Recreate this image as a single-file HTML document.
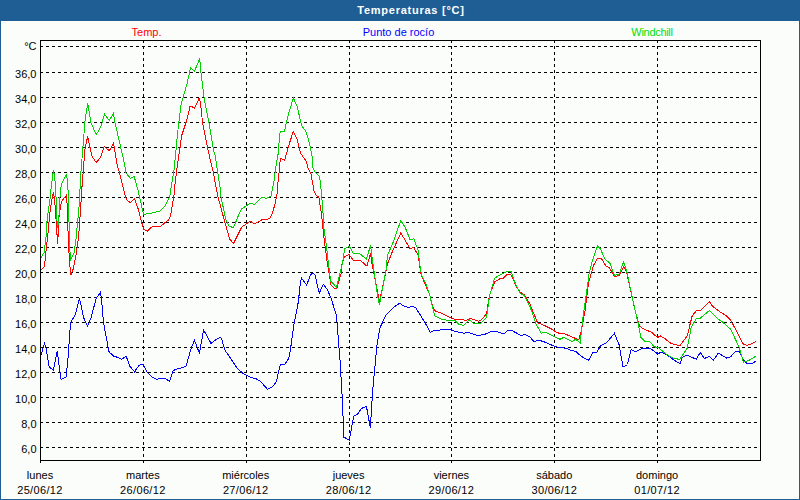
<!DOCTYPE html>
<html><head><meta charset="utf-8"><style>
html,body{margin:0;padding:0;background:#fbfdfb;}
svg{display:block;}
</style></head><body>
<svg width="800" height="500" viewBox="0 0 800 500">
<rect width="800" height="500" fill="#fbfdfb"/>
<rect x="0" y="0" width="800" height="21" fill="#1f5e94"/>
<rect x="0" y="0" width="1" height="500" fill="#1f5e94"/>
<rect x="799" y="0" width="1" height="500" fill="#1f5e94"/>
<rect x="0" y="499" width="800" height="1" fill="#1f5e94"/>
<path d="M40 46.5H760 M40 72.5H760 M40 97.5H760 M40 122.5H760 M40 147.5H760 M40 172.5H760 M40 197.5H760 M40 222.5H760 M40 247.5H760 M40 272.5H760 M40 297.5H760 M40 322.5H760 M40 347.5H760 M40 372.5H760 M40 397.5H760 M40 422.5H760 M40 447.5H760 M143.5 40V460 M246.5 40V460 M349.5 40V460 M451.5 40V460 M554.5 40V460 M657.5 40V460" stroke="#000" stroke-width="1" stroke-dasharray="3 3" fill="none" shape-rendering="crispEdges"/>
<path d="M40.5 40.5H760.5V460.5H40.5ZM40.5 460V463M143.5 460V463M246.5 460V463M349.5 460V463M451.5 460V463M554.5 460V463M657.5 460V463" stroke="#000" stroke-width="1" fill="none" shape-rendering="crispEdges"/>
<path d="M41,355 L44.5,343.5 L45.8,347 L49.1,366.2 L50.4,368.1 L53.5,370 L57.2,351.2 L61,379.4 L66,376.9 L67.9,360 L69.8,332.5 L70.8,322.5 L75.4,314.4 L79.5,298.1 L83.5,317.5 L87.5,326.2 L91,318.1 L96,298.8 L100.4,292.5 L101.6,300 L103.5,322.5 L107.9,346.2 L109.1,351.9 L113.5,356 L117.2,357.2 L121.6,359.4 L126.2,356.2 L129.8,366.2 L134.8,372.2 L136,369.4 L139.1,365.2 L142.9,364.4 L147.2,372.2 L152.2,377.2 L156.6,379.4 L160.4,378.1 L164.8,378.5 L169.5,381.2 L172.9,371.2 L174.8,369.8 L180.4,368.1 L186,366.2 L191,348.8 L194.4,340.2 L197.2,347.5 L199.5,353.1 L203.5,330.2 L206.6,335 L211,343.5 L215.4,340 L220,337.2 L221.6,338.8 L224.8,350 L230,357.4 L237,368 L242.7,373.2 L251,377.6 L255.4,378.4 L260.2,381 L267.6,389.4 L272.9,386.3 L276.4,381.5 L280.3,364.4 L284.7,364.4 L288.6,358.7 L290.4,350 L293.8,325 L298.7,300 L299.4,290.1 L300.6,281.8 L301.6,278.3 L306.7,285.2 L310.1,275.7 L311.6,273.8 L313.7,273.3 L315,274.9 L319.2,293.2 L323.4,284.4 L327.6,290.1 L331.4,299.3 L333.5,306 L336.5,315.7 L340,360 L342,394 L344,437.2 L345.6,438 L349.3,440.4 L350.4,434 L353.6,416.4 L357.6,414 L361.6,408.4 L366.4,406.3 L368,414.8 L370.4,428.4 L371.5,408.4 L373.1,386 L377,345 L380,327.7 L386,315 L393.5,307.5 L399.5,303.3 L404,306 L408.5,307.5 L412.2,306 L416,308.2 L425,322.5 L430.2,332.2 L434,330.7 L440,330 L442.2,329.2 L449,329.5 L455,331.4 L464,333.2 L468.5,332.5 L477.5,335.5 L485,334.3 L491,331.4 L497,331.7 L503.7,334 L508.2,330.2 L511.2,330.2 L521,335.5 L524.7,334.4 L530,337 L533.7,341.5 L539.7,340.4 L545,342.2 L555.4,346.7 L560,347.5 L566,348.3 L570.5,350.2 L575.7,351.3 L581,356.2 L588.5,360.4 L593,352.5 L596.7,352.8 L600.5,345.7 L606.5,342.7 L614.4,333.3 L619.2,345 L623,367.2 L627.5,364.5 L631.2,349.5 L635.7,351.7 L641.7,348.7 L650,348.3 L657.5,353.7 L662,352.2 L668,355.8 L674,360 L680,363.7 L682.3,357.2 L687.2,355.2 L696.2,359.2 L700.3,352.3 L704.4,358.5 L709.3,356.4 L713.4,360.2 L718.4,353.1 L726.6,358 L730.7,356.9 L734.8,352 L738.8,351.2 L740.4,354 L743.2,359.6 L747,363.4 L752,363.4 L755.6,361.3" stroke="#0000ff" stroke-width="1" fill="none" shape-rendering="crispEdges"/>
<path d="M41,270 L44.5,266.2 L46,251.2 L47.9,233.8 L49.8,213.8 L51.6,201.2 L53.5,191.9 L54.8,202.5 L56.6,226.2 L57.5,244.4 L58.5,231.2 L59.1,215 L61.6,201.2 L66.6,195 L67.2,206.2 L68.5,245 L69.8,265 L70.8,275 L72.9,270 L75.8,256.2 L78.5,237.5 L79.8,220 L82.2,183.8 L85,149 L87.7,136.2 L91.7,155.7 L96.2,162.5 L100.7,157.2 L104.2,146.3 L109.3,150.8 L113.5,143.3 L117.2,165 L119.8,173.8 L122.2,183.8 L125.4,196.9 L127.2,200.6 L130.4,202.5 L134.5,198.5 L138.2,209 L143.5,229.2 L147.2,231.2 L151.7,227 L156.2,226.2 L160.7,226.2 L168.2,220.2 L170.5,216.5 L174,195 L174.5,188 L176.5,172 L178.5,157 L180.5,145 L181.5,136 L186.5,121 L190,106.5 L191.5,106.5 L194.5,108 L198.5,100 L199,98 L200,101 L201,108 L202.5,122 L207,145 L210,159 L213,171 L217.5,195 L224.5,221 L229.7,239 L233.5,243.5 L241.7,227 L246.2,224 L250,221 L254.5,223.8 L262.5,219.5 L267.5,219.5 L270,218 L272.5,213 L275,204 L277,194 L278,182 L279.1,172 L280.4,158.4 L284.8,160.1 L287.9,148.2 L293.3,131.3 L297.1,139 L300.7,153.5 L306.4,161.5 L308,168 L311,174 L314,191 L315.5,194.5 L319,197.5 L320.5,208 L321.5,214 L323.5,234 L326.5,257 L327.5,264 L331,284.8 L333.7,287.9 L336.7,289 L338.2,283.3 L341.3,272.6 L342,264 L344.5,257 L349,254.5 L353,260 L359.5,260 L364,263.5 L367,266.2 L370.5,253 L372,264 L378.5,297 L379.5,301.5 L386,271 L387.5,263.8 L393,250 L400.8,233 L405,240 L410,248.8 L413.8,247.5 L418,255 L421.2,275 L429.4,294 L433.2,308.2 L435.4,311.2 L440,312.7 L452,318.5 L455,319.2 L462.5,319.7 L466.2,320.7 L470,318.2 L478.2,321.2 L481.2,320 L486.5,314 L489.5,295.2 L494.7,281.7 L500,278.7 L503.7,278 L507.5,274.2 L510.5,274.2 L512,276.5 L516.5,287 L520.2,292.2 L524.7,295.2 L530,304.2 L537.5,322.7 L545,325.7 L551,328.7 L555.4,331.7 L560,333.7 L564.5,333.7 L569.7,336 L578.7,339.7 L581,332.2 L585.2,310 L588.5,283 L593.7,265 L597.5,258.2 L601.2,258.2 L605.7,265.7 L609.5,267.7 L614,276.2 L616.2,276.5 L619.2,275.2 L623.7,266.5 L626.7,272.5 L635,310 L639.5,326.2 L644,329.2 L651.5,332.2 L657.5,337.5 L660.5,336 L665,338.7 L671,343.5 L675.5,344.7 L680,345.7 L687.2,335.9 L692.1,316.2 L696.2,310.8 L700.3,310.5 L709.3,301.5 L712.6,306.4 L719.2,311.3 L725.7,315.4 L730.7,320.3 L735.6,329.3 L743,343.8 L747,345.4 L752,343.8 L755.6,341.6" stroke="#ff0000" stroke-width="1" fill="none" shape-rendering="crispEdges"/>
<path d="M41,257.5 L44.1,252.5 L46,237.5 L47.2,218.8 L49.8,201.2 L51.6,183.8 L53.5,170 L54.8,177.5 L56.6,206.2 L57.2,227.5 L58.5,224 L60.4,190 L62.2,182.5 L66.6,174.4 L67.9,186.2 L69.8,247.5 L70.4,260 L74.1,252.5 L76,238.8 L79.1,206.2 L81,171.2 L83.5,140 L85,121.2 L87.7,103.2 L91,122.7 L96.2,134.7 L100.7,127.2 L104.5,114.2 L109.3,120.5 L113.5,113.3 L115,122.7 L124.8,165 L125.4,171.9 L130.4,178.5 L134.1,176.2 L138.2,191 L143.5,214.2 L149.5,213.8 L154,212.4 L160,211.2 L165.2,206 L169.7,196.2 L170,195 L172,182 L174,170 L175.5,155 L176,150 L177.5,134 L179,121 L180.5,109 L181,105 L183.5,96 L187,84 L190.5,68 L194.5,71 L198.5,61.5 L199.5,59.2 L200.5,64 L201,72.5 L204,97 L204.5,100 L207,113 L209,123 L213.5,150 L215.5,157 L217.5,171 L220,187 L220.5,195 L226,220.2 L229,226.2 L233.5,227.7 L238,216.5 L241.7,208.7 L246.2,206 L250,203 L254.5,204.5 L262,197 L266.5,198.5 L271,196 L272.5,188 L274.5,179 L275.1,172 L276.4,163.2 L278.2,153.5 L279.5,136.4 L280.4,131.2 L284.4,131.2 L286.6,121.9 L288.8,113.1 L291.4,104.3 L293.3,98 L297.1,106.1 L300.7,121.9 L302,126.3 L305.5,130.7 L307.7,136.8 L309.9,145.6 L312.5,157.9 L313,168 L315,172 L319.5,176.5 L320.5,183 L321.5,194 L322.5,205 L324,229 L326.5,247 L329.5,272.6 L330.6,281 L336.3,287.1 L337.5,283.3 L339.8,274.2 L342.8,262 L344.5,249 L347,247.5 L349.5,246.5 L353,253 L359.5,253.5 L366.5,259 L370.5,245.5 L372,257 L377.7,297 L379.5,304.5 L386,270 L387.5,255.5 L393,242.5 L400.8,220.5 L405,227 L410,239.5 L413.8,238.8 L418,250 L420.5,270 L422,276 L426.5,285 L430.2,297 L433.2,309.7 L434.7,315.7 L440,318.7 L449,320.7 L455,320.7 L459.5,324.8 L464,325.2 L469.2,319.7 L473,323 L481.2,323 L486.5,317.7 L489.5,296 L494.7,278 L501.5,274.2 L506.7,271.7 L511.2,271.7 L515,282.5 L520.2,293.7 L524,295.2 L530,306.5 L536,324 L541.2,333.2 L545.7,332.2 L551,335.2 L560,339.2 L563.7,337.5 L572,341.7 L575.7,339.3 L580.2,342.7 L582.5,321 L584.7,305 L589.2,273.2 L592.2,261.2 L597.5,246.2 L600.5,249.2 L605,259 L610.2,263.5 L612.5,271 L614.7,275.5 L619.2,274 L623.7,261.7 L626.7,271 L635,310 L638,322.5 L641,337.5 L644.7,341.2 L650,341.7 L653.7,346.5 L659,348 L665,353.2 L671.7,357.7 L678.4,359.2 L680,359.2 L687.2,348.2 L691.3,326.9 L696.2,318.7 L700.3,318.2 L709.3,310.5 L717.5,318.7 L722.5,322 L730.7,329.3 L738.9,346.6 L743.4,362.1 L748.7,360.5 L755.6,356.4" stroke="#00d000" stroke-width="1" fill="none" shape-rendering="crispEdges"/>
<text x="411" y="14" font-family="Liberation Sans, sans-serif" font-size="11" font-weight="bold" fill="#fff" letter-spacing="0.75" text-anchor="middle">Temperaturas [°C]</text>
<text x="146.5" y="36" font-family="Liberation Sans, sans-serif" font-size="11" fill="#ff0000" text-anchor="middle">Temp.</text>
<text x="398.5" y="36" font-family="Liberation Sans, sans-serif" font-size="11" fill="#0000ff" text-anchor="middle">Punto de rocío</text>
<text x="652" y="36" font-family="Liberation Sans, sans-serif" font-size="11" fill="#00dd00" letter-spacing="-0.3" text-anchor="middle">Windchill</text>
<text x="36.5" y="50" font-family="Liberation Sans, sans-serif" font-size="11" fill="#000" text-anchor="end">°C</text>
<text x="36.5" y="78" font-family="Liberation Sans, sans-serif" font-size="11" fill="#000" text-anchor="end">36,0</text>
<text x="36.5" y="103" font-family="Liberation Sans, sans-serif" font-size="11" fill="#000" text-anchor="end">34,0</text>
<text x="36.5" y="128" font-family="Liberation Sans, sans-serif" font-size="11" fill="#000" text-anchor="end">32,0</text>
<text x="36.5" y="153" font-family="Liberation Sans, sans-serif" font-size="11" fill="#000" text-anchor="end">30,0</text>
<text x="36.5" y="178" font-family="Liberation Sans, sans-serif" font-size="11" fill="#000" text-anchor="end">28,0</text>
<text x="36.5" y="203" font-family="Liberation Sans, sans-serif" font-size="11" fill="#000" text-anchor="end">26,0</text>
<text x="36.5" y="228" font-family="Liberation Sans, sans-serif" font-size="11" fill="#000" text-anchor="end">24,0</text>
<text x="36.5" y="253" font-family="Liberation Sans, sans-serif" font-size="11" fill="#000" text-anchor="end">22,0</text>
<text x="36.5" y="278" font-family="Liberation Sans, sans-serif" font-size="11" fill="#000" text-anchor="end">20,0</text>
<text x="36.5" y="303" font-family="Liberation Sans, sans-serif" font-size="11" fill="#000" text-anchor="end">18,0</text>
<text x="36.5" y="328" font-family="Liberation Sans, sans-serif" font-size="11" fill="#000" text-anchor="end">16,0</text>
<text x="36.5" y="353" font-family="Liberation Sans, sans-serif" font-size="11" fill="#000" text-anchor="end">14,0</text>
<text x="36.5" y="378" font-family="Liberation Sans, sans-serif" font-size="11" fill="#000" text-anchor="end">12,0</text>
<text x="36.5" y="403" font-family="Liberation Sans, sans-serif" font-size="11" fill="#000" text-anchor="end">10,0</text>
<text x="36.5" y="428" font-family="Liberation Sans, sans-serif" font-size="11" fill="#000" text-anchor="end">8,0</text>
<text x="36.5" y="453" font-family="Liberation Sans, sans-serif" font-size="11" fill="#000" text-anchor="end">6,0</text>
<text x="40.0" y="479" font-family="Liberation Sans, sans-serif" font-size="11" fill="#000" text-anchor="middle">lunes</text>
<text x="40.0" y="494" font-family="Liberation Sans, sans-serif" font-size="11" fill="#000" letter-spacing="0.35" text-anchor="middle">25/06/12</text>
<text x="142.9" y="479" font-family="Liberation Sans, sans-serif" font-size="11" fill="#000" text-anchor="middle">martes</text>
<text x="142.9" y="494" font-family="Liberation Sans, sans-serif" font-size="11" fill="#000" letter-spacing="0.35" text-anchor="middle">26/06/12</text>
<text x="245.7" y="479" font-family="Liberation Sans, sans-serif" font-size="11" fill="#000" text-anchor="middle">miércoles</text>
<text x="245.7" y="494" font-family="Liberation Sans, sans-serif" font-size="11" fill="#000" letter-spacing="0.35" text-anchor="middle">27/06/12</text>
<text x="348.6" y="479" font-family="Liberation Sans, sans-serif" font-size="11" fill="#000" text-anchor="middle">jueves</text>
<text x="348.6" y="494" font-family="Liberation Sans, sans-serif" font-size="11" fill="#000" letter-spacing="0.35" text-anchor="middle">28/06/12</text>
<text x="451.4" y="479" font-family="Liberation Sans, sans-serif" font-size="11" fill="#000" text-anchor="middle">viernes</text>
<text x="451.4" y="494" font-family="Liberation Sans, sans-serif" font-size="11" fill="#000" letter-spacing="0.35" text-anchor="middle">29/06/12</text>
<text x="554.3" y="479" font-family="Liberation Sans, sans-serif" font-size="11" fill="#000" text-anchor="middle">sábado</text>
<text x="554.3" y="494" font-family="Liberation Sans, sans-serif" font-size="11" fill="#000" letter-spacing="0.35" text-anchor="middle">30/06/12</text>
<text x="657.1" y="479" font-family="Liberation Sans, sans-serif" font-size="11" fill="#000" text-anchor="middle">domingo</text>
<text x="657.1" y="494" font-family="Liberation Sans, sans-serif" font-size="11" fill="#000" letter-spacing="0.35" text-anchor="middle">01/07/12</text>
</svg></body></html>
